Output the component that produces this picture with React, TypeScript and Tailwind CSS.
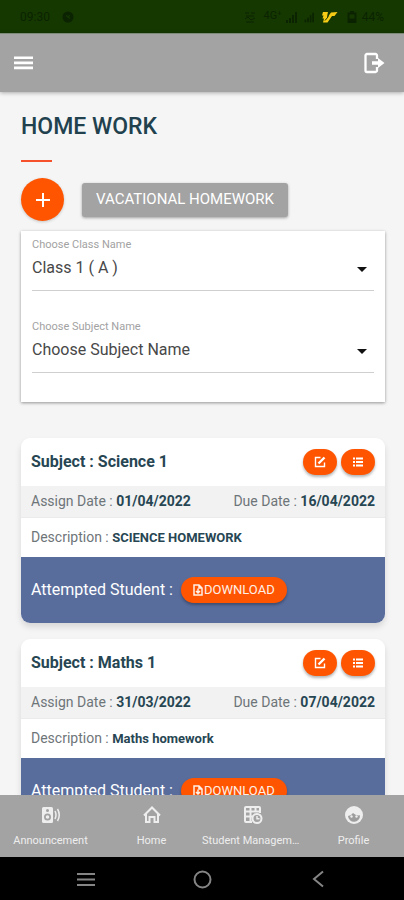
import type { ReactNode } from 'react'
import { MdArrowDropDown } from 'react-icons/md'

type Homework = {
  subject: string
  assigned: string
  due: string
  description: string
}

const homeworks: Homework[] = [
  { subject: 'Science 1', assigned: '01/04/2022', due: '16/04/2022', description: 'SCIENCE HOMEWORK' },
  { subject: 'Maths 1', assigned: '31/03/2022', due: '07/04/2022', description: 'Maths homework' },
]

function MenuIcon() {
  return (
    <svg width="20" height="14" viewBox="0 0 20 14" fill="currentColor">
      <path d="M0 .5h19v2.500H0zM0 5.500h19v2.800H0zM0 10.500h19v2.800H0z" />
    </svg>
  )
}

function LogoutIcon() {
  return (
    <svg width="22" height="22" viewBox="0 0 22 22" fill="none" stroke="currentColor">
      <path d="M14 7V3.500a1.500 1.500 0 0 0-1.500-1.500H4a1.500 1.500 0 0 0-1.500 1.500v15A1.500 1.500 0 0 0 4 20h8.500a1.500 1.500 0 0 0 1.500-1.500V15" strokeWidth="2.300" />
      <path d="M9 9.300h6V6l6.500 5-6.500 5v-3.300H9z" fill="currentColor" stroke="none" />
    </svg>
  )
}

function SpeakerIcon() {
  return (
    <svg width="20" height="20" viewBox="0 0 20 20" fill="none" stroke="currentColor">
      <path
        fill="currentColor"
        stroke="none"
        fillRule="evenodd"
        d="M2.500 2h8A1.500 1.500 0 0 1 12 3.500v13a1.500 1.500 0 0 1-1.500 1.500h-8A1.500 1.500 0 0 1 1 16.500v-13A1.500 1.500 0 0 1 2.500 2zM6.500 4a1.500 1.500 0 1 0 0 3 1.500 1.500 0 0 0 0-3zM6.500 8.500a3.500 3.500 0 1 0 0 7 3.500 3.500 0 0 0 0-7zM6.500 10.200a1.800 1.800 0 1 1 0 3.600 1.800 1.800 0 0 1 0-3.600z"
      />
      <path d="M14 6q2 4 0 8M16.500 4q3.500 6 0 12" strokeWidth="1.500" />
    </svg>
  )
}

function HomeIcon() {
  return (
    <svg width="20" height="20" viewBox="0 0 20 20" fill="none" stroke="currentColor" strokeWidth="2">
      <path d="M2 10.500l8-8 8 8" />
      <path d="M4 9v8h3.500v-5h5v5H16V9" />
    </svg>
  )
}

function TableClockIcon() {
  return (
    <svg width="20" height="20" viewBox="0 0 20 20" fill="none" stroke="currentColor">
      <path d="M9 17H3a1 1 0 0 1-1-1V3a1 1 0 0 1 1-1h13a1 1 0 0 1 1 1v5" strokeWidth="2" />
      <path d="M2 6.500h15M2 11.500h8M7.500 2v14M12.500 2v5" strokeWidth="2" />
      <circle cx="14" cy="13.500" r="4.500" strokeWidth="2" />
      <path d="M14 11v2.800h2.500" strokeWidth="1.500" />
    </svg>
  )
}

function FaceIcon() {
  return (
    <svg width="20" height="20" viewBox="0 0 20 20">
      <circle cx="10" cy="10" r="9" fill="currentColor" />
      <path d="M4 11Q7.500 10.500 9 8q2.500 2.800 7 2.300a6 6 0 0 1-12 .7z" fill="#9d9d9d" />
      <circle cx="7.500" cy="11.500" r="1.200" fill="currentColor" />
      <circle cx="12.500" cy="11.500" r="1.200" fill="currentColor" />
    </svg>
  )
}

function EditIcon() {
  return (
    <svg width="12" height="12" viewBox="0 0 12 12" fill="none" stroke="currentColor">
      <path d="M6.500 1.500h-5v9h9v-4" strokeWidth="1.400" />
      <path d="M4.500 7.500l6-6" strokeWidth="2.400" />
    </svg>
  )
}

function ListIcon() {
  return (
    <svg width="12" height="12" viewBox="0 0 12 12" fill="currentColor">
      <path d="M1 1.500h2v2H1zM4 1.500h7v2H4zM1 5h2v2H1zM4 5h7v2H4zM1 8.500h2v2H1zM4 8.500h7v2H4z" />
    </svg>
  )
}

function FileDownloadIcon() {
  return (
    <svg width="10" height="12" viewBox="0 0 10 12" fill="none" stroke="currentColor">
      <path d="M6 1H1v10h8V4zM6 1v3h3" strokeWidth="1.500" />
      <path d="M5 4.500v4M3 7l2 2 2-2" strokeWidth="1.500" />
    </svg>
  )
}

function StatusBar() {
  return (
    <div className="flex h-[33px] shrink-0 items-center justify-between bg-[#153800] px-5 text-[12px] text-[#0b2300]">
      <div className="flex items-center gap-3">
        <span>09:30</span>
        <svg width="12" height="12" viewBox="0 0 12 12">
          <circle cx="6" cy="6" r="5.500" fill="#0b2300" />
          <path d="M4 4.500l4 3M8 4.500L5 6" stroke="#153800" strokeWidth="1.200" />
        </svg>
      </div>
      <div className="flex items-center gap-1">
        <svg width="12" height="12" viewBox="0 0 12 12" stroke="#0b2300" fill="none">
          <path d="M1 2h4M7 2h4M2 5h8M1 8l3-2 3 3 4-2M2 11h8" />
        </svg>
        <span className="pl-1 text-[11px]">4G⁺</span>
        <svg width="12" height="12" viewBox="0 0 12 12" fill="#0b2300">
          <path d="M0 9h2v3H0zM3 7h2v5H3zM6 4h2v8H6zM9 1h2v11H9z" />
        </svg>
        <svg width="12" height="12" viewBox="0 0 14 12" fill="#0b2300">
          <path d="M3 9h2v3H3zM6 7h2v5H6zM9 4h2v8H9zM12 1h2v11h-2z" />
        </svg>
        <svg width="16" height="12" viewBox="0 0 16 12" className="ml-1" fill="#f5cb16">
          <path d="M1 1h5L5 7l4-5.500L15.500 1l-3 4H10L5.500 11.500H1l1-4H.5l1-3H0z" />
          <path d="M3 9.500L6 6l.5-5" stroke="#153800" strokeWidth="1" fill="none" />
        </svg>
        <svg width="12" height="12" viewBox="0 0 12 12" fill="none" stroke="#0b2300" className="ml-1">
          <path d="M4 1h4M2.500 2.500h7v9h-7z" strokeWidth="1.800" />
          <path d="M3 8h6v3H3z" fill="#0b2300" />
        </svg>
        <span>44%</span>
      </div>
    </div>
  )
}

function SelectField({ id, label, value }: { id: string; label: string; value: string }) {
  return (
    <div>
      <label htmlFor={id} className="block text-[11px] leading-4 text-[#a2a2a2]">{label}</label>
      <div className="relative border-b border-[#cfcfcf]">
        <select id={id} className="block h-[37px] w-full appearance-none bg-transparent pb-2 text-[16px] text-[#484848] outline-none">
          <option>{value}</option>
        </select>
        <MdArrowDropDown size={24} className="pointer-events-none absolute top-1 right-0 text-[#111111]" />
      </div>
    </div>
  )
}

function PillButton({ label, children }: { label: string; children: ReactNode }) {
  return (
    <button
      aria-label={label}
      className="flex h-[26px] w-[34px] items-center justify-center rounded-full bg-[#ff5500] text-white shadow-[0_2px_3px_rgba(0,0,0,0.3)]"
    >
      {children}
    </button>
  )
}

function HomeworkCard({ item }: { item: Homework }) {
  return (
    <article className="overflow-hidden rounded-[9px] bg-white text-[14px] text-[#6e7579] shadow-[0_4px_6px_rgba(0,0,0,0.12)]">
      <div className="flex h-12 items-center justify-between px-[10px]">
        <h2 className="text-[16px] font-bold text-[#274653]">Subject : {item.subject}</h2>
        <div className="flex gap-1">
          <PillButton label="Edit"><EditIcon /></PillButton>
          <PillButton label="Details"><ListIcon /></PillButton>
        </div>
      </div>
      <div className="flex h-8 items-center justify-between border-b border-[#ebebeb] bg-[#f2f2f2] px-[10px]">
        <span>Assign Date : <b className="font-bold text-[#274653]">{item.assigned}</b></span>
        <span>Due Date : <b className="font-bold text-[#274653]">{item.due}</b></span>
      </div>
      <div className="flex h-[39px] items-center px-[10px]">
        <span>Description : <b className="text-[13px] font-bold text-[#274653]">{item.description}</b></span>
      </div>
      <div className="flex h-[66px] items-center gap-2 bg-[#596d9d] px-[10px] text-white">
        <span className="text-[16px]">Attempted Student :</span>
        <button className="flex h-[26px] items-center gap-px rounded-full bg-[#ff5500] px-3 text-[13px] text-[#fff0e8] shadow-[0_2px_3px_rgba(0,0,0,0.3)]">
          <FileDownloadIcon />
          DOWNLOAD
        </button>
      </div>
    </article>
  )
}

function NavItem({ label, children }: { label: string; children: ReactNode }) {
  return (
    <a href="#" className="flex min-w-0 flex-1 flex-col items-center gap-2 pt-[10px]">
      {children}
      <span className="w-full truncate text-center text-[11px] leading-4">{label}</span>
    </a>
  )
}

export default function App() {
  return (
    <div className="flex h-screen flex-col overflow-hidden bg-[#f5f5f5] font-[Roboto,sans-serif]">
      <StatusBar />

      <header className="z-10 flex h-[59px] shrink-0 items-center justify-between border-t border-[#7d8a78] bg-[#a3a3a3] pr-[19px] pl-[14px] text-white shadow-[0_1px_4px_rgba(0,0,0,0.3)]">
        <button aria-label="Menu"><MenuIcon /></button>
        <button aria-label="Log out"><LogoutIcon /></button>
      </header>

      <main className="min-h-0 flex-1 overflow-hidden pt-[21px] pr-[19px] pl-[21px]">
        <h1 className="text-[23px] leading-7 font-medium text-[#21414e]">HOME WORK</h1>
        <div className="mt-[19px] h-[2px] w-[31px] bg-[#f4512c]" />

        <div className="mt-4 flex items-center gap-[18px]">
          <button
            aria-label="Add homework"
            className="flex size-[43px] items-center justify-center rounded-full bg-[#ff5500] text-white shadow-[0_1px_3px_rgba(0,0,0,0.2)]"
          >
            <svg width="14" height="14" viewBox="0 0 14 14" fill="currentColor">
              <path d="M6 0h2v6h6v2H8v6H6V8H0V6h6z" />
            </svg>
          </button>
          <button className="h-[34px] rounded-[3px] bg-[#a3a3a3] px-[14px] text-[15px] text-white shadow-[0_1px_3px_rgba(0,0,0,0.35)]">
            VACATIONAL HOMEWORK
          </button>
        </div>

        <section className="mt-[10px] flex flex-col gap-7 bg-white px-[11px] pt-[6px] pb-[29px] shadow-[0_1px_3px_rgba(0,0,0,0.4)]">
          <SelectField id="class-name" label="Choose Class Name" value="Class 1 ( A )" />
          <SelectField id="subject-name" label="Choose Subject Name" value="Choose Subject Name" />
        </section>

        <div className="mt-9 flex flex-col gap-4">
          {homeworks.map(h => (
            <HomeworkCard key={h.subject} item={h} />
          ))}
        </div>
      </main>

      <nav className="z-10 flex h-[62px] shrink-0 bg-[#a3a3a3] text-[#eeeeee]">
        <NavItem label="Announcement"><SpeakerIcon /></NavItem>
        <NavItem label="Home"><HomeIcon /></NavItem>
        <NavItem label="Student Management"><TableClockIcon /></NavItem>
        <NavItem label="Profile"><FaceIcon /></NavItem>
      </nav>

      {/* Android system buttons */}
      <div className="flex h-[43px] shrink-0 items-center justify-between bg-black px-[76px] text-[#858585]">
        <button aria-label="Recent apps">
          <svg width="20" height="20" viewBox="0 0 20 20" fill="none" stroke="currentColor" strokeWidth="2">
            <path d="M1 5h18M1 10.500h18M1 16h18" />
          </svg>
        </button>
        <button aria-label="Home screen">
          <svg width="20" height="20" viewBox="0 0 20 20" fill="none" stroke="currentColor" strokeWidth="2">
            <circle cx="10.500" cy="10.500" r="8" />
          </svg>
        </button>
        <button aria-label="Back">
          <svg width="20" height="20" viewBox="0 0 20 20" fill="none" stroke="currentColor" strokeWidth="2">
            <path d="M15 2.500L6 10l9 7.500" />
          </svg>
        </button>
      </div>
    </div>
  )
}
